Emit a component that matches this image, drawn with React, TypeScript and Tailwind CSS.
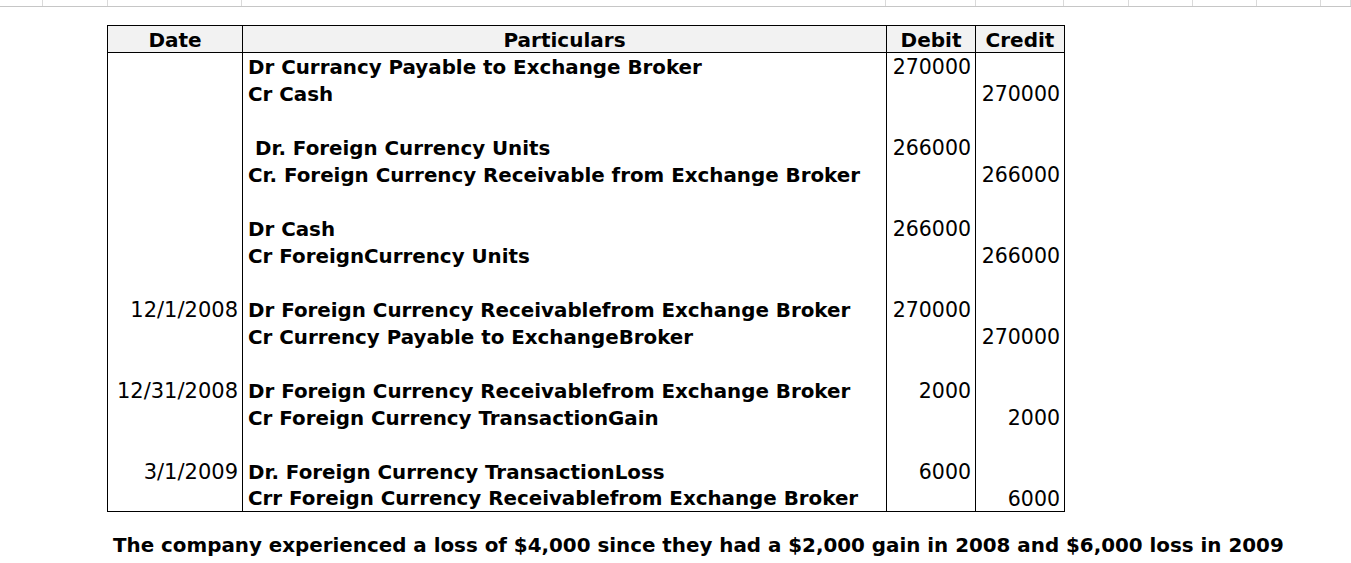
const font = { fontFamily: '"DejaVu Sans", Verdana, sans-serif' };

type Line = { date?: string; text: string; debit?: string; credit?: string; indent?: boolean };

const ROWS: Line[] = [
  { text: "Dr Currancy Payable to Exchange Broker", debit: "270000" },
  { text: "Cr Cash", credit: "270000" },
  { text: "" },
  { text: "Dr. Foreign Currency Units", debit: "266000", indent: true },
  { text: "Cr. Foreign Currency Receivable from Exchange Broker", credit: "266000" },
  { text: "" },
  { text: "Dr Cash", debit: "266000" },
  { text: "Cr ForeignCurrency Units", credit: "266000" },
  { text: "" },
  { date: "12/1/2008", text: "Dr Foreign Currency Receivablefrom Exchange Broker", debit: "270000" },
  { text: "Cr Currency Payable to ExchangeBroker", credit: "270000" },
  { text: "" },
  { date: "12/31/2008", text: "Dr Foreign Currency Receivablefrom Exchange Broker", debit: "2000" },
  { text: "Cr Foreign Currency TransactionGain", credit: "2000" },
  { text: "" },
  { date: "3/1/2009", text: "Dr. Foreign Currency TransactionLoss", debit: "6000" },
  { text: "Crr Foreign Currency Receivablefrom Exchange Broker", credit: "6000" },
];

const GRID_COLS = [43, 65, 134, 644, 90, 88, 65, 64, 64, 64, 30];

export default function App() {
  return (
    <div className="w-[1351px] h-[563px] bg-white text-black overflow-hidden" style={font}>
      {/* sheet gridline strip */}
      <div className="flex h-[7px] border-b border-[#c6c6c6]">
        {GRID_COLS.map((w, i) => (
          <div key={i} className="h-full border-r border-[#dadada]" style={{ width: w }} />
        ))}
      </div>

      <div className="pl-[107px] pt-[18px]">
        <table className="border-collapse border border-black table-fixed">
          <colgroup>
            <col className="w-[135px]" />
            <col className="w-[644px]" />
            <col className="w-[89px]" />
            <col className="w-[89px]" />
          </colgroup>
          <thead>
            <tr className="bg-[#f2f2f2] h-[27px] text-[20px] font-bold leading-none">
              <th className="border border-black text-center pt-[2px]">Date</th>
              <th className="border border-black text-center pt-[2px]">Particulars</th>
              <th className="border border-black text-center pt-[2px]">Debit</th>
              <th className="border border-black text-center pt-[2px]">Credit</th>
            </tr>
          </thead>
          <tbody>
            {ROWS.map((r, i) => (
              <tr key={i} className="h-[27px] leading-none">
                <td className="border-x border-black text-right pr-[4px] pt-[2px] text-[21px]">{r.date}</td>
                <td
                  className={`border-x border-black pt-[3px] text-[19.85px] font-bold whitespace-nowrap ${
                    r.indent ? "pl-[12px]" : "pl-[5px]"
                  }`}
                >
                  {r.text}
                </td>
                <td className="border-x border-black text-right pr-[4px] pt-[2px] text-[20.5px]">{r.debit}</td>
                <td className="border-x border-black text-right pr-[4px] pt-[2px] text-[20.5px]">{r.credit}</td>
              </tr>
            ))}
          </tbody>
        </table>
      </div>

      <p className="pl-[113px] pt-[24px] text-[19.87px] font-bold leading-none whitespace-nowrap">
        The company experienced a loss of $4,000 since they had a $2,000 gain in 2008 and $6,000 loss in 2009
      </p>
    </div>
  );
}
